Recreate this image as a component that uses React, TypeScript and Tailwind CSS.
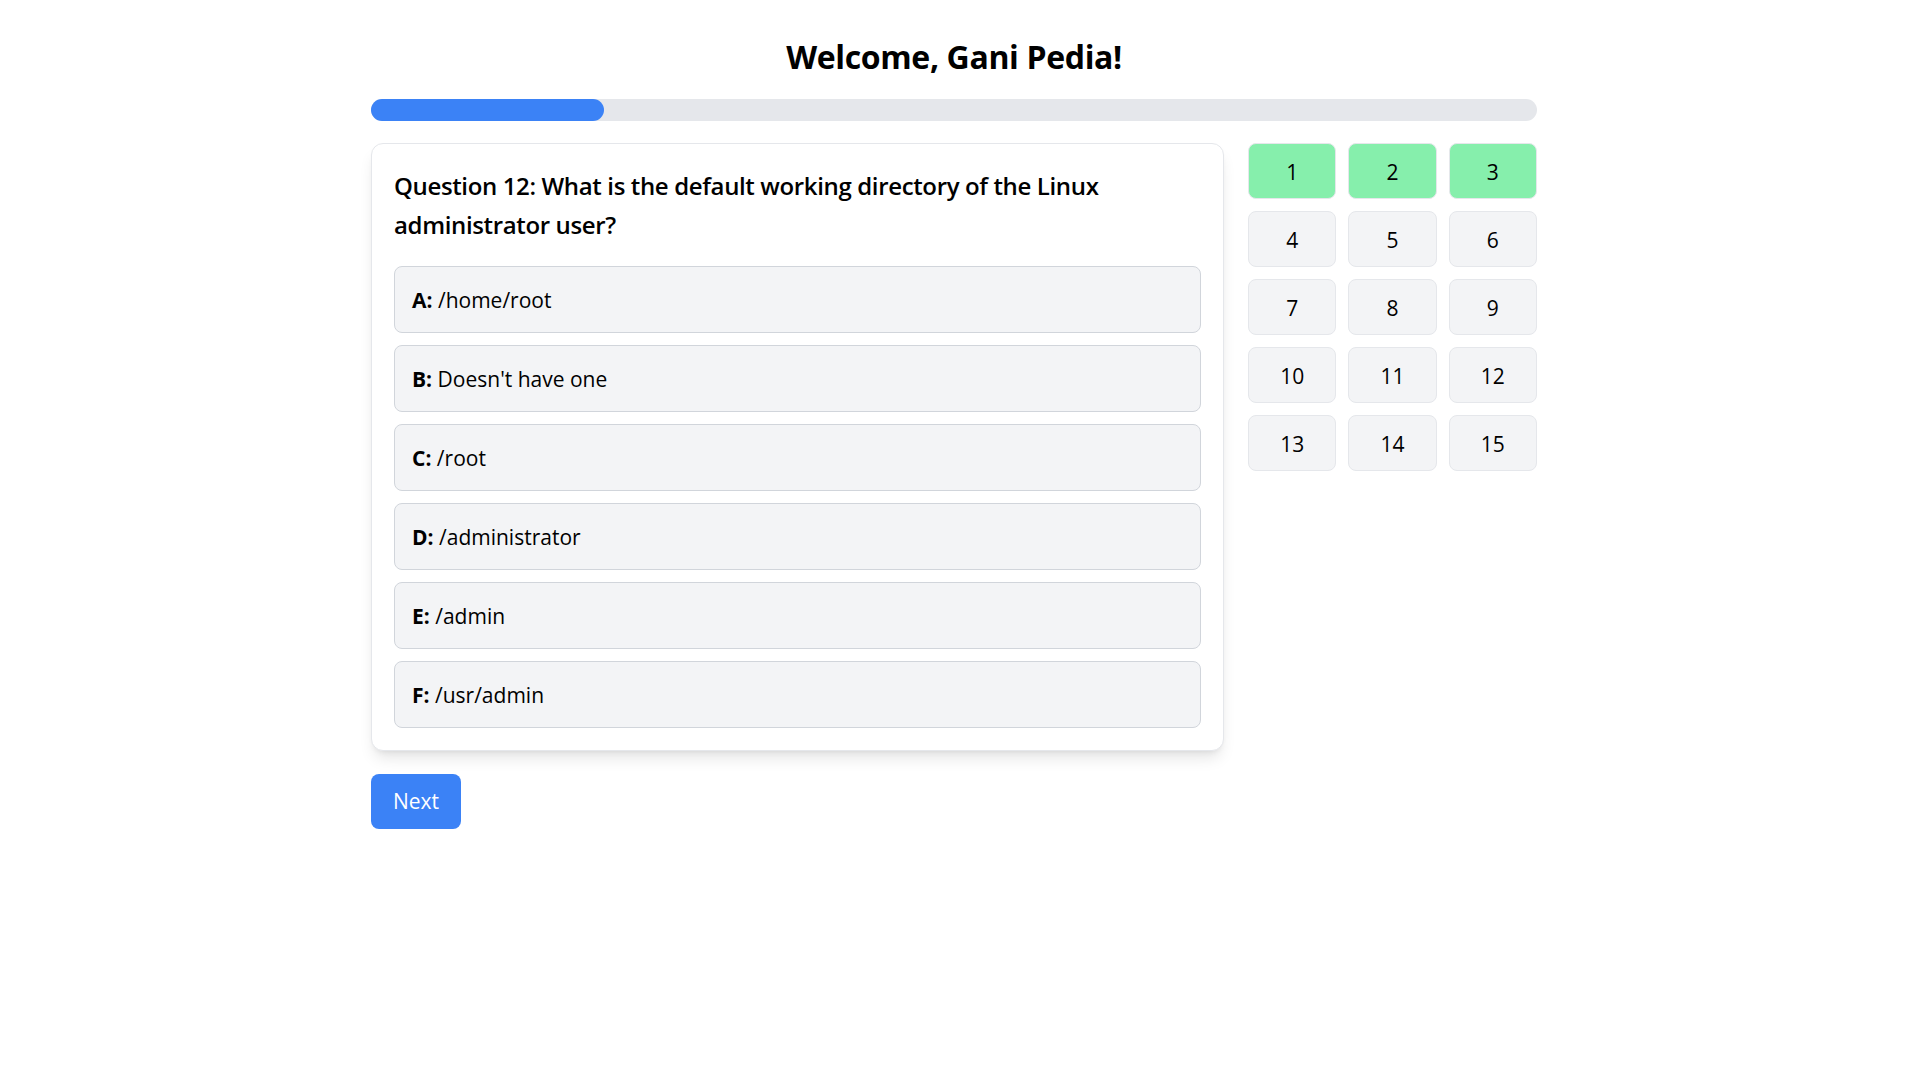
const options = [
  { key: 'A', text: '/home/root' },
  { key: 'B', text: "Doesn't have one" },
  { key: 'C', text: '/root' },
  { key: 'D', text: '/administrator' },
  { key: 'E', text: '/admin' },
  { key: 'F', text: '/usr/admin' },
];

const answered = [1, 2, 3];

export default function App() {
  const total = 15;
  const progress = (answered.length / total) * 100;

  return (
    <div className="min-h-screen bg-white pr-[4px] font-['Open_Sans',sans-serif] text-black">
      <div className="w-[1166px] mx-auto pt-[37px]">
        <h1 className="text-center text-[32px] leading-[40px] font-bold tracking-[-0.011em]">Welcome, Gani Pedia!</h1>

        <div className="mt-[22px] h-[22px] rounded-full bg-[#e5e7eb]">
          <div className="h-full rounded-full bg-[#3b82f6]" style={{ width: `${progress}%` }} />
        </div>

        <div className="mt-[22px] flex items-start gap-6">
          <div className="w-[853px]">
            <div className="rounded-xl border border-[#e5e7eb] bg-white p-[22px] shadow-lg">
              <h2 className="text-[24px] leading-[39px] font-semibold tracking-[-0.015em]">
                Question 12: What is the default working directory of the Linux administrator user?
              </h2>
              <div className="mt-[22px] flex flex-col gap-3">
                {options.map((o) => (
                  <button
                    key={o.key}
                    className="w-full rounded-lg border border-[#d1d5db] bg-[#f3f4f6] px-[17px] pt-[19px] pb-[17px] text-left text-[21px] leading-[29px]"
                  >
                    <span className="font-bold">{o.key}:</span> {o.text}
                  </button>
                ))}
              </div>
            </div>

            <button className="mt-[23px] rounded-lg bg-[#3b82f6] px-[22px] py-[13px] text-[21px] leading-[29px] text-white">
              Next
            </button>
          </div>

          <div className="grid w-[289px] grid-cols-3 gap-3">
            {Array.from({ length: total }).map((_, i) => (
              <button
                key={i}
                className={`rounded-lg border border-[#e5e7eb] pt-[13px] pb-[11px] text-[21px] leading-[30px] ${
                  answered.includes(i + 1) ? 'bg-[#86efac]' : 'bg-[#f3f4f6]'
                }`}
              >
                {i + 1}
              </button>
            ))}
          </div>
        </div>
      </div>
    </div>
  );
}
